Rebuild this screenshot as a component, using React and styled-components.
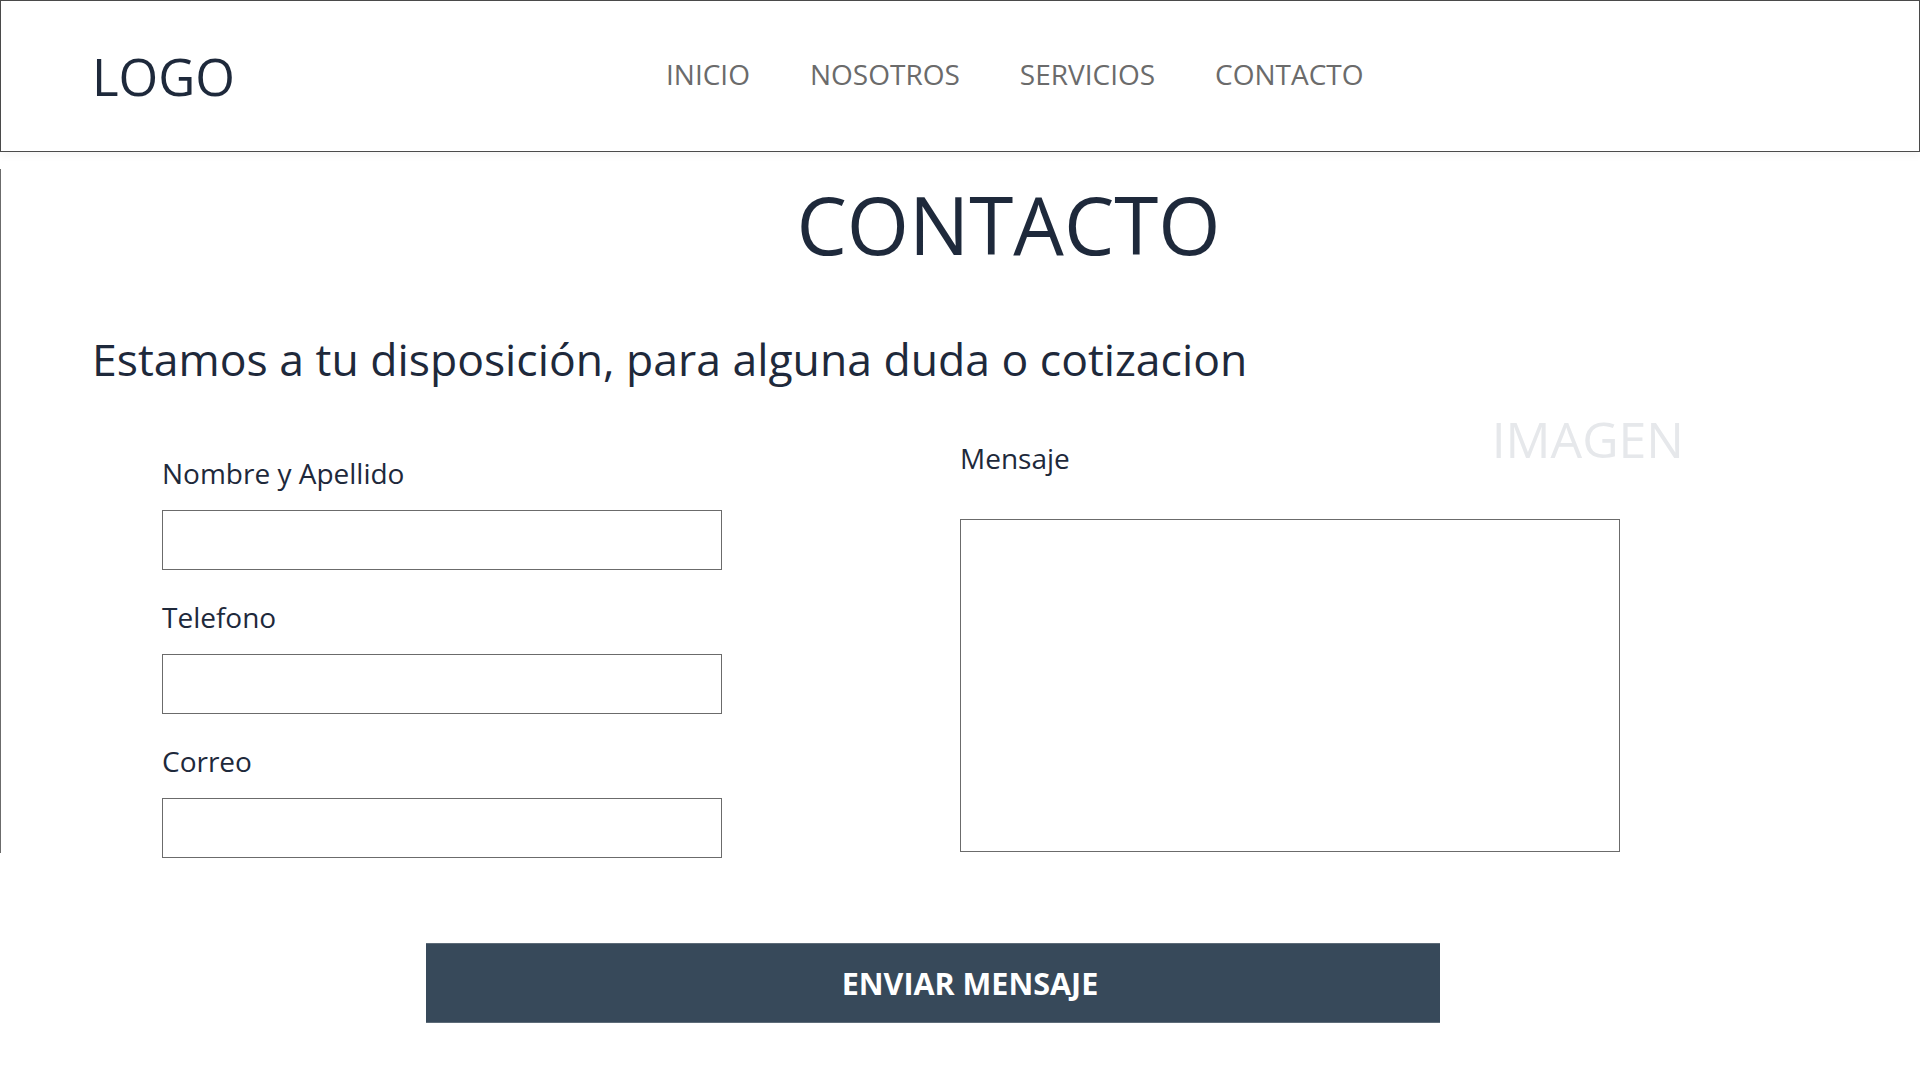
import styled, { createGlobalStyle } from 'styled-components';

// Page basics
const GlobalStyle = createGlobalStyle`
  body {
    margin: 0;
    background: #ffffff;
    font-family: 'Open Sans', 'Noto Sans', Arial, sans-serif;
    color: #1e293b;
  }
  * {
    box-sizing: border-box;
  }
`;

// Top bar with logo and links
const Header = styled.header`
  height: 152px;
  border: 1px solid #4a4a4a;
  display: flex;
  align-items: center;
  padding-left: 91px;
  box-shadow: 0 4px 8px rgba(0, 0, 0, 0.04);
`;

const Logo = styled.div`
  width: 574px;
  font-size: 51px;
  line-height: 1;
  color: #1e293b;
`;

const Nav = styled.nav`
  display: flex;
  gap: 60px;
  margin-bottom: 5px;
`;

const NavLink = styled.a`
  font-size: 28px;
  color: #6b6b6b;
  text-decoration: none;
  cursor: pointer;
`;

// Contact section
const Section = styled.section`
  margin-top: 17px;
  height: 684px;
  border-left: 1px solid #6b6b6b;
  padding-top: 15px;
`;

const Title = styled.h1`
  margin: 0;
  padding-left: 96px;
  text-align: center;
  font-size: 80px;
  font-weight: 400;
  line-height: 1;
  color: #1e293b;
`;

const Subtitle = styled.p`
  margin: 68px 0 0;
  padding-left: 91px;
  font-size: 44.5px;
  line-height: 1.2;
  color: #1e293b;
`;

const Form = styled.form`
  display: grid;
  grid-template-columns: 560px 724px;
  column-gap: 238px;
  align-items: start;
  margin-top: 20px;
  padding-left: 161px;
`;

const Column = styled.div`
  display: flex;
  flex-direction: column;
  padding-top: ${(p) => p.$offset || 0}px;
`;

const Label = styled.label`
  display: block;
  font-size: 28px;
  line-height: 36px;
  color: #1e293b;
  margin-top: ${(p) => p.$top || 0}px;
`;

const Input = styled.input`
  display: block;
  width: 560px;
  height: 60px;
  margin-top: 19px;
  border: 1px solid #6b6b6b;
  border-radius: 0;
  background: #fff;
  font-family: inherit;
  font-size: 20px;
  padding: 0 12px;
`;

const MessageHead = styled.div`
  display: flex;
  justify-content: space-between;
  align-items: flex-start;
  width: 724px;
`;

const Placeholder = styled.span`
  font-size: 50px;
  line-height: 68px;
  color: #e6e8eb;
`;

const TextArea = styled.textarea`
  display: block;
  width: 660px;
  height: 333px;
  margin-top: 43px;
  border: 1px solid #6b6b6b;
  border-radius: 0;
  resize: none;
  font-family: inherit;
  font-size: 20px;
  padding: 12px;
`;

const SendButton = styled.button`
  display: block;
  margin: 90px 0 0 426px;
  width: 1014px;
  height: 80px;
  border: none;
  border-top: 1px solid #5d6b78;
  border-bottom: 1px solid #5d6b78;
  background: #37495a;
  color: #ffffff;
  font-family: 'Open Sans', 'Noto Sans', Arial, sans-serif;
  font-size: 30.5px;
  font-weight: 700;
  padding: 0 0 0 74px;
  cursor: pointer;
`;

const links = ['INICIO', 'NOSOTROS', 'SERVICIOS', 'CONTACTO'];

function App() {
  return (
    <>
      <GlobalStyle />
      <Header>
        <Logo>LOGO</Logo>
        <Nav>
          {links.map((l) => (
            <NavLink key={l}>{l}</NavLink>
          ))}
        </Nav>
      </Header>
      <Section>
        <Title>CONTACTO</Title>
        <Subtitle>Estamos a tu disposición, para alguna duda o cotizacion</Subtitle>
        <Form onSubmit={(e) => e.preventDefault()}>
          <Column $offset={50}>
            <Label>Nombre y Apellido</Label>
            <Input type="text" />
            <Label $top={29}>Telefono</Label>
            <Input type="tel" />
            <Label $top={29}>Correo</Label>
            <Input type="email" />
          </Column>
          <Column>
            <MessageHead>
              <Label $top={35}>Mensaje</Label>
              <Placeholder>IMAGEN</Placeholder>
            </MessageHead>
            <TextArea />
          </Column>
        </Form>
      </Section>
      <SendButton type="button">ENVIAR MENSAJE</SendButton>
    </>
  );
}

export default App;
